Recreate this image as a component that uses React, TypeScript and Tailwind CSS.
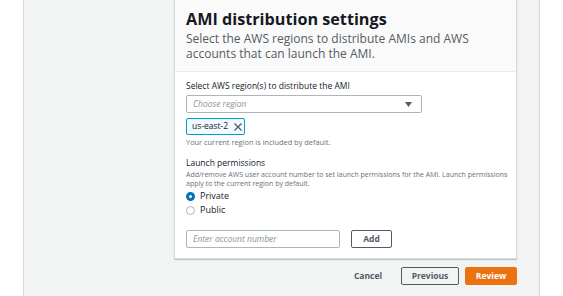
export default function App() {
  return (
    <div className="w-[563px] h-[296px] bg-white overflow-hidden font-['Open_Sans',sans-serif] text-[#16191f]">
      <div className="ml-[23px] w-[517px] h-full bg-[#f2f3f3] border-x border-[#d5dbdb] flex flex-col items-end pr-[22px]">
        {/* Card */}
        <div className="w-[343px] bg-white border-x border-b border-[#d5dbdb] shadow-[0_1px_1px_rgba(0,28,36,0.2)]">
          <div className="bg-[#fafafa] border-b border-[#eaeded] px-[11px] pt-[8px] pb-[10px]">
            <h2 className="text-[16.2px] leading-[22px] font-bold">AMI distribution settings</h2>
            <p className="mt-[1px] text-[12px] leading-[15px] text-[#545b64]">
              <span className="block">Select the AWS regions to distribute AMIs and AWS</span>
              <span className="block">accounts that can launch the AMI.</span>
            </p>
          </div>

          <div className="px-[11px] pt-[7px] pb-[10px]">
            <label className="block text-[8.5px] leading-[14px]">Select AWS region(s) to distribute the AMI</label>
            <div className="mt-[2px] w-[236px] h-[18px] border border-[#aab7b8] rounded-[2px] flex items-center justify-between px-[6px]">
              <span className="text-[8.5px] italic text-[#879596]">Choose region</span>
              <svg width="7" height="5" viewBox="0 0 7 5" className="mr-[3px]">
                <path d="M0 0h7L3.5 5z" fill="#545b64" />
              </svg>
            </div>
            <div className="mt-[5px] w-[59px] h-[17px] border border-[#00a1c9] bg-[#f1faff] rounded-[2px] flex items-center pl-[5px] gap-[6px] whitespace-nowrap">
              <span className="text-[8.5px] leading-none">us-east-2</span>
              <svg width="8" height="8" viewBox="0 0 8 8">
                <path d="M0.5 0.5l7 7M7.5 0.5l-7 7" stroke="#545b64" strokeWidth="1.3" />
              </svg>
            </div>
            <p className="mt-[1px] text-[7.4px] leading-[12px] text-[#687078]">Your current region is included by default.</p>

            <h3 className="mt-[8px] text-[8.5px] leading-[14px]">Launch permissions</h3>
            <p className="text-[7px] leading-[9px] text-[#687078] whitespace-nowrap">
              Add/remove AWS user account number to set launch permissions for the AMI. Launch permissions
              <br />
              apply to the current region by default.
            </p>
            <div className="mt-[3px] flex flex-col gap-[4px]">
              <div className="flex items-center gap-[5px] h-[10px]">
                <span className="w-[9px] h-[9px] rounded-full border-[3px] border-[#0073bb] bg-white" />
                <span className="text-[9px]">Private</span>
              </div>
              <div className="flex items-center gap-[5px] h-[10px]">
                <span className="w-[9px] h-[9px] rounded-full border border-[#aab7b8] bg-white" />
                <span className="text-[9px]">Public</span>
              </div>
            </div>

            <div className="mt-[15px] flex items-center gap-[11px]">
              <div className="w-[154px] h-[18px] border border-[#aab7b8] rounded-[2px] flex items-center px-[6px]">
                <span className="text-[8.5px] italic text-[#879596]">Enter account number</span>
              </div>
              <div className="w-[41px] h-[18px] border border-[#545b64] rounded-[2px] flex items-center justify-center text-[8.5px] font-bold text-[#545b64]">
                Add
              </div>
            </div>
          </div>
        </div>

        {/* Footer actions */}
        <div className="mt-[8px] flex items-center">
          <span className="mr-[19px] text-[8.5px] font-bold text-[#545b64]">Cancel</span>
          <div className="w-[58px] h-[18px] border border-[#545b64] rounded-[2px] flex items-center justify-center text-[8.5px] font-bold text-[#545b64]">
            Previous
          </div>
          <div className="ml-[6px] w-[52px] h-[18px] bg-[#ec7211] border border-[#ec7211] rounded-[2px] flex items-center justify-center text-[8.5px] font-bold text-white">
            Review
          </div>
        </div>
      </div>
    </div>
  );
}
